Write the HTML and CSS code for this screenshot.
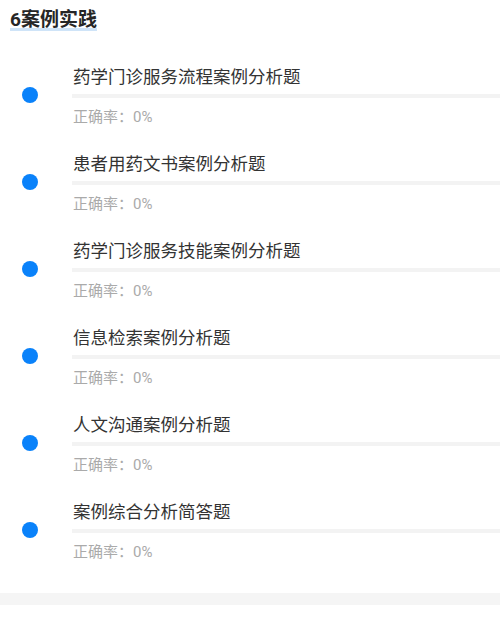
FILE: index.html
```html
<!DOCTYPE html>
<html lang="zh">
<head>
<meta charset="utf-8">
<link rel="stylesheet" href="styles.css">
</head>
<body>
<div class="page">
  <div class="header"><span class="title">6案例实践</span></div>
  <div class="list">
    <div class="row"><div class="dot"></div><div class="body"><div class="name">药学门诊服务流程案例分析题</div><div class="bar"></div><div class="rate">正确率：0%</div></div></div>
    <div class="row"><div class="dot"></div><div class="body"><div class="name">患者用药文书案例分析题</div><div class="bar"></div><div class="rate">正确率：0%</div></div></div>
    <div class="row"><div class="dot"></div><div class="body"><div class="name">药学门诊服务技能案例分析题</div><div class="bar"></div><div class="rate">正确率：0%</div></div></div>
    <div class="row"><div class="dot"></div><div class="body"><div class="name">信息检索案例分析题</div><div class="bar"></div><div class="rate">正确率：0%</div></div></div>
    <div class="row"><div class="dot"></div><div class="body"><div class="name">人文沟通案例分析题</div><div class="bar"></div><div class="rate">正确率：0%</div></div></div>
    <div class="row"><div class="dot"></div><div class="body"><div class="name">案例综合分析简答题</div><div class="bar"></div><div class="rate">正确率：0%</div></div></div>
  </div>
  <div class="band"></div>
</div>
</body>
</html>
```
FILE: styles.css
```css
html, body {
  margin: 0;
  padding: 0;
  background: #fff;
}
.page {
  font-family: Roboto, "Noto Sans CJK SC", sans-serif;
  width: 500px;
}
.header {
  height: 51px;
  padding: 9px 0 0 10px;
}
.title {
  display: inline-block;
  font-size: 19px;
  font-weight: bold;
  line-height: 22px;
  color: #262626;
  background: linear-gradient(to top, #cfe4f8 0, #cfe4f8 3px, transparent 3px);
}
.list {
  padding-bottom: 11px;
}
.row {
  display: flex;
  height: 87px;
}
.dot {
  width: 16px;
  height: 16px;
  border-radius: 50%;
  background: #0a82fa;
  margin: 27px 0 0 22px;
  flex: none;
}
.body {
  flex: 1;
  margin-left: 34px;
}
.name {
  font-size: 17.5px;
  line-height: 34px;
  color: #333;
  padding-left: 1px;
}
.bar {
  height: 4px;
  background: #f3f3f3;
}
.rate {
  font-size: 15px;
  line-height: 38px;
  color: #aaa;
  padding-left: 1px;
}
.band {
  height: 12px;
  background: #f5f5f5;
}
```
